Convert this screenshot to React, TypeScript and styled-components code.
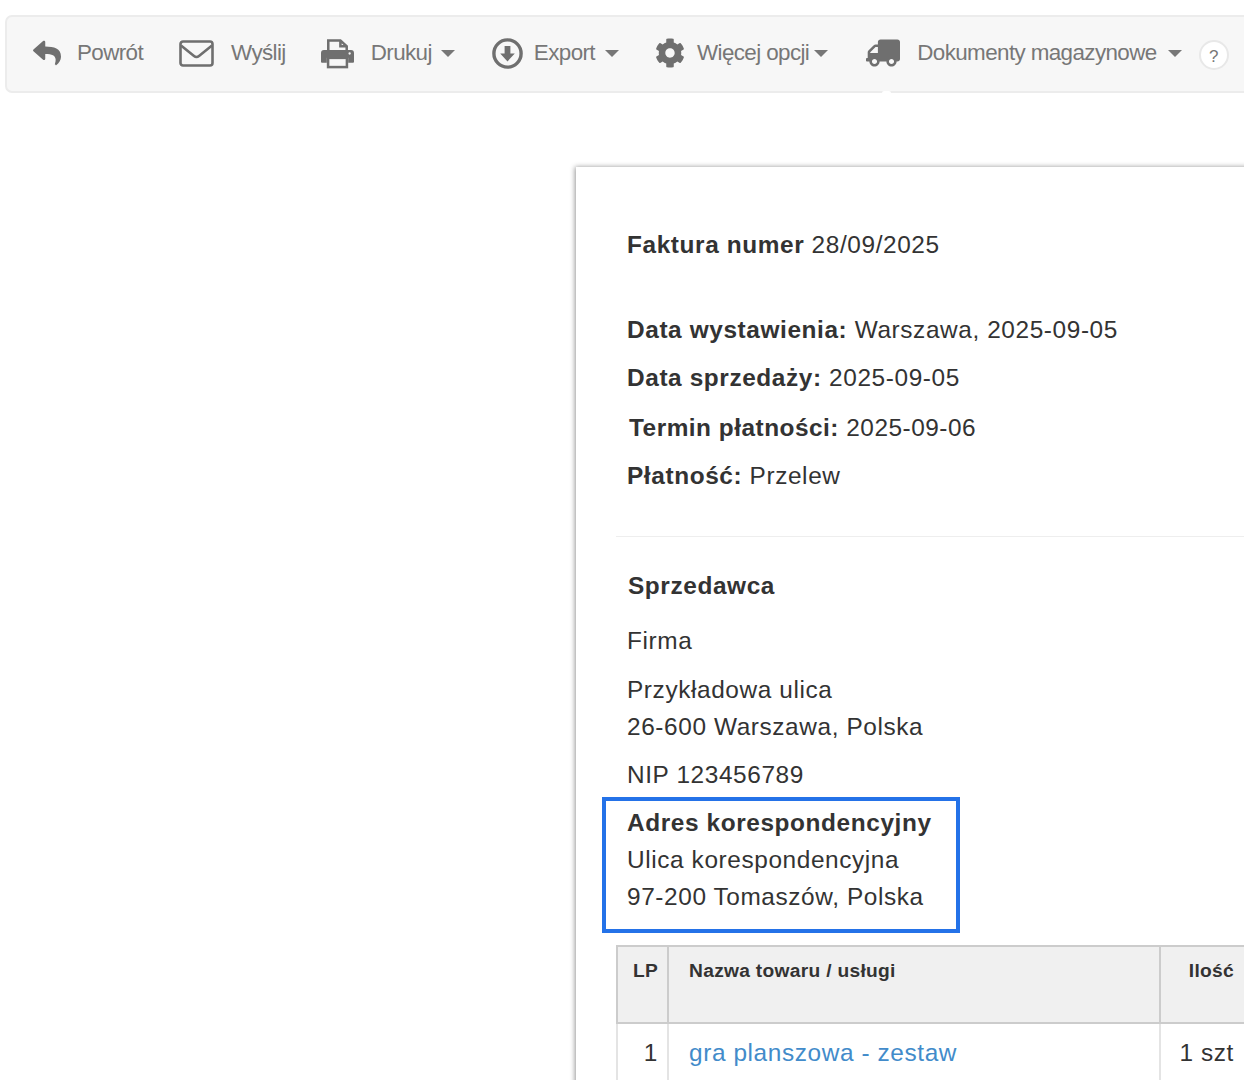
import * as React from 'react';
import styled, { createGlobalStyle } from 'styled-components';
import { FaCog, FaReply, FaTruck } from 'react-icons/fa';

const GlobalStyle = createGlobalStyle`
  html, body {
    margin: 0;
    padding: 0;
    background: #fff;
  }
  body {
    font-family: "Liberation Sans", Arial, sans-serif;
    color: #333;
  }
`;

const Page = styled.div`
  width: 1244px;
  height: 1080px;
  overflow: hidden;
  background: #fff;
`;

const Toolbar = styled.nav`
  position: relative;
  box-sizing: border-box;
  width: 1300px;
  height: 78px;
  margin: 15px 0 0 5px;
  padding: 0 0 2px 25px;
  display: flex;
  align-items: center;
  background: #f7f7f7;
  border: 2px solid #ececec;
  border-radius: 7px;

  &::after {
    content: '';
    position: absolute;
    left: 875px;
    bottom: -2px;
    width: 9px;
    height: 2px;
    background: #fff;
    border-radius: 3px 3px 0 0;
  }
`;

const Item = styled.div<{ $after: number; $gap: number }>`
  display: flex;
  align-items: center;
  gap: ${props => props.$gap}px;
  margin-right: ${props => props.$after}px;
  color: #777;
  font-size: 22.4px;
  letter-spacing: -0.6px;
  white-space: nowrap;
`;

const IconBox = styled.span<{ $w: number }>`
  width: ${props => props.$w}px;
  display: flex;
  justify-content: center;
  align-items: center;
  color: #6f6f6f;
`;

const Label = styled.span`
  display: flex;
  align-items: center;
`;

const Caret = styled.span<{ $left: number }>`
  width: 0;
  height: 0;
  margin-left: ${props => props.$left}px;
  border-top: 7px solid #777;
  border-left: 7px solid transparent;
  border-right: 7px solid transparent;
`;

const Help = styled.span`
  box-sizing: border-box;
  width: 30px;
  height: 30px;
  margin-top: 4px;
  display: flex;
  align-items: center;
  justify-content: center;
  padding-top: 3px;
  background: #fff;
  border: 2px solid #e8e8e8;
  border-radius: 50%;
  color: #777;
  font-size: 17px;
`;

const Sheet = styled.main`
  box-sizing: border-box;
  width: 800px;
  height: 1000px;
  margin: 74px 0 0 576px;
  padding: 59px 0 0 51px;
  background: #fff;
  box-shadow: -1px 0 5px rgba(0, 0, 0, 0.42);
  font-size: 24.4px;
  letter-spacing: 0.6px;
  line-height: 37px;
  color: #333;
`;

const Line = styled.p<{ $top?: number; $shift?: number; $tight?: boolean }>`
  margin: ${props => props.$top ?? 0}px 0 0 ${props => props.$shift ?? 0}px;
  letter-spacing: ${props => (props.$tight ? '0.5px' : 'inherit')};
  white-space: nowrap;
`;

const Divider = styled.hr`
  height: 0;
  margin: 42px 0 30px -11px;
  border: 0;
  border-top: 1px solid #eee;
`;

const Heading = styled.h4`
  margin: 0 0 18px 1px;
  font-size: 24.4px;
  line-height: 37px;
  font-weight: 700;
`;

const AddressBox = styled.section`
  box-sizing: border-box;
  width: 358px;
  height: 136px;
  margin: 4px 0 12px -25px;
  padding: 3px 0 0 21px;
  border: 4px solid #2472e8;
`;

const Table = styled.table`
  width: 643px;
  margin-left: -11px;
  border-collapse: collapse;
  table-layout: fixed;
`;

const HeadCell = styled.th<{ $w: number; $align?: string; $pad: string }>`
  box-sizing: border-box;
  width: ${props => props.$w}px;
  height: 77px;
  padding: ${props => props.$pad};
  vertical-align: top;
  text-align: ${props => props.$align ?? 'left'};
  font-size: 19.2px;
  letter-spacing: 0.3px;
  line-height: 37px;
  font-weight: 700;
  background: #f0f0f0;
  border: 2px solid #ccc;
`;

const BodyCell = styled.td<{ $align?: string; $pad: string }>`
  box-sizing: border-box;
  height: 60px;
  padding: ${props => props.$pad};
  vertical-align: top;
  text-align: ${props => props.$align ?? 'left'};
  border: 2px solid #e4e4e4;
  border-top-color: #ccc;
`;

const ProductLink = styled.a`
  color: #428bca;
  text-decoration: none;
`;

const MailIcon = () => (
  <svg width="35" height="27" viewBox="0 0 35 27" fill="none" stroke="currentColor" strokeWidth="2.6">
    <rect x="1.5" y="1.5" width="32" height="24" rx="2.5" />
    <path d="M2 5.5 L15 16 Q17.5 18 20 16 L33 5.5" />
  </svg>
);

const PrintIcon = () => (
  <svg width="33" height="31" viewBox="0 0 34 31" fill="none">
    <path d="M7.5 13V2H20L26.5 8V13M20 2V8H26.5" stroke="currentColor" strokeWidth="2.6" />
    <path
      d="M3 12H31a3 3 0 0 1 3 3V24a1 1 0 0 1-1 1H28V20H6V25H1a1 1 0 0 1-1-1V15a3 3 0 0 1 3-3Z"
      fill="currentColor"
    />
    <rect x="7.3" y="20" width="19.4" height="9.5" stroke="currentColor" strokeWidth="2.6" />
    <circle cx="29.5" cy="15.5" r="1.2" fill="#f7f7f7" />
  </svg>
);

const DownloadIcon = () => (
  <svg width="31" height="31" viewBox="0 0 31 31">
    <circle cx="15.5" cy="15.5" r="13.6" fill="none" stroke="currentColor" strokeWidth="3.4" />
    <path d="M12.6 8h5.8v7.4h4.4L15.5 23.4 8.2 15.4h4.4Z" fill="currentColor" />
  </svg>
);

const FlippedTruck = styled(FaTruck)`
  transform: scaleX(-1);
`;

export default function App() {
  return (
    <Page>
      <GlobalStyle />
      <Toolbar>
        <Item $gap={16} $after={36}>
          <IconBox $w={29}><FaReply size={28} /></IconBox>
          <Label>Powrót</Label>
        </Item>
        <Item $gap={17} $after={35}>
          <IconBox $w={35}><MailIcon /></IconBox>
          <Label>Wyślij</Label>
        </Item>
        <Item $gap={17} $after={37}>
          <IconBox $w={33}><PrintIcon /></IconBox>
          <Label>Drukuj<Caret $left={9} /></Label>
        </Item>
        <Item $gap={11} $after={36}>
          <IconBox $w={31}><DownloadIcon /></IconBox>
          <Label>Export<Caret $left={10} /></Label>
        </Item>
        <Item $gap={11} $after={38}>
          <IconBox $w={31}><FaCog size={30} /></IconBox>
          <Label>Więcej opcji<Caret $left={5} /></Label>
        </Item>
        <Item $gap={17} $after={17}>
          <IconBox $w={34}><FlippedTruck size={34} /></IconBox>
          <Label>Dokumenty magazynowe<Caret $left={11} /></Label>
        </Item>
        <Help>?</Help>
      </Toolbar>

      <Sheet>
        <Line><strong>Faktura numer</strong> 28/09/2025</Line>
        <Line $top={48}><strong>Data wystawienia:</strong> Warszawa, 2025-09-05</Line>
        <Line $top={11}><strong>Data sprzedaży:</strong> 2025-09-05</Line>
        <Line $top={13} $shift={2} $tight><strong>Termin płatności:</strong> 2025-09-06</Line>
        <Line $top={11}><strong>Płatność:</strong> Przelew</Line>
        <Divider />
        <Heading>Sprzedawca</Heading>
        <Line>Firma</Line>
        <Line $top={12}>Przykładowa ulica</Line>
        <Line>26-600 Warszawa, Polska</Line>
        <Line $top={11}>NIP 123456789</Line>
        <AddressBox>
          <Line><strong>Adres korespondencyjny</strong></Line>
          <Line>Ulica korespondencyjna</Line>
          <Line>97-200 Tomaszów, Polska</Line>
        </AddressBox>
        <Table>
          <thead>
            <tr>
              <HeadCell $w={51} $align="center" $pad="5px 0 0 6px">LP</HeadCell>
              <HeadCell $w={492} $pad="5px 10px 0 20px">Nazwa towaru / usługi</HeadCell>
              <HeadCell $w={100} $align="right" $pad="5px 25px 0 0">Ilość</HeadCell>
            </tr>
          </thead>
          <tbody>
            <tr>
              <BodyCell $align="right" $pad="10px 9px 0 0">1</BodyCell>
              <BodyCell $pad="10px 10px 0 20px"><ProductLink href="#">gra planszowa - zestaw</ProductLink></BodyCell>
              <BodyCell $align="right" $pad="10px 25px 0 0">1 szt</BodyCell>
            </tr>
          </tbody>
        </Table>
      </Sheet>
    </Page>
  );
}
